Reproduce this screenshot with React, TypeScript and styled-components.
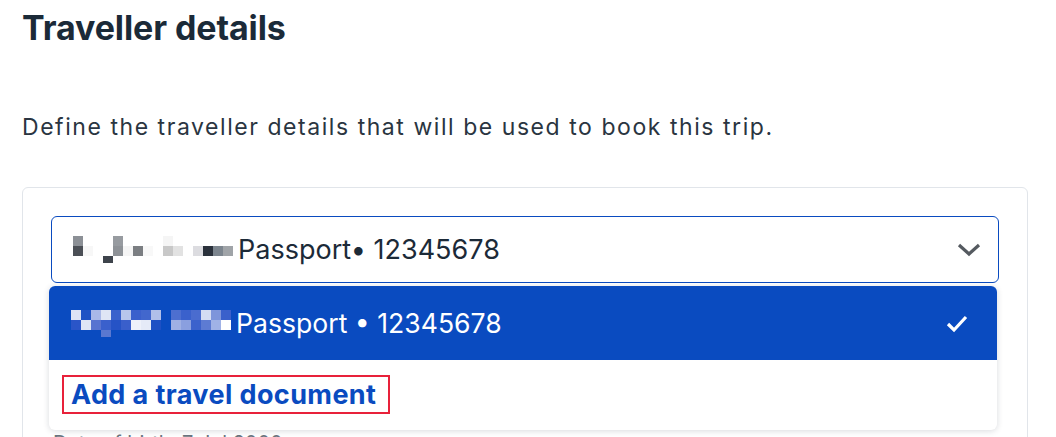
import { FC } from "react";
import styled, { createGlobalStyle } from "styled-components";

const GlobalStyle = createGlobalStyle`
  body {
    margin: 0;
    background: #ffffff;
    font-family: Inter, "Noto Sans", sans-serif;
    color: #1c2a38;
  }
`;

// mosaic cells that hide the traveller name: [column, row, colour]
type Cell = [number, number, string];

const closedName: Cell[] = [
  [0, 0, "#8c9096"], [0, 1, "#4b4f56"],
  [1, 1, "#f7f7f7"],
  [3, 2, "#3e444c"],
  [4, 0, "#979ba0"], [4, 1, "#8e9297"],
  [5, 1, "#f5f5f5"],
  [6, 1, "#7b7e82"],
  [7, 1, "#f8f8f8"],
  [9, 0, "#f5f5f5"], [9, 1, "#c8c8c8"],
  [10, 1, "#e2e2e2"],
  [12, 1, "#dcdce0"],
  [13, 1, "#2a313b"],
  [14, 1, "#7c858e"],
  [15, 1, "#a0a4a8"],
];

const openName: Cell[] = [
  [0, 0, "#dde3f5"], [0, 1, "#2a55c8"],
  [1, 0, "#1f52c4"], [1, 1, "#dfe5f5"],
  [2, 0, "#a9b8e8"], [2, 1, "#5873d0"],
  [3, 0, "#dfe5f5"], [3, 1, "#3a60cc"], [3, 2, "#5a78d0"],
  [4, 0, "#3b62cc"], [4, 1, "#2653c6"],
  [5, 0, "#b8c6ec"], [5, 1, "#3a5fcb"],
  [6, 0, "#3b60cc"], [6, 1, "#eef1fa"],
  [7, 0, "#4267cd"], [7, 1, "#e5eaf7"],
  [8, 0, "#b0bfe9"], [8, 1, "#1e50c4"],
  [10, 0, "#4d6fd0"], [10, 1, "#9fb0e4"],
  [11, 0, "#3a61cc"], [11, 1, "#8a9fdf"],
  [12, 0, "#4a6ccf"], [12, 1, "#3c62cc"],
  [13, 0, "#d4dcf3"], [13, 1, "#5d7bd3"],
  [14, 0, "#7e95db"], [14, 1, "#a0b2e6"],
  [15, 0, "#3a60cb"], [15, 1, "#ffffff"],
];

const Page = styled.div`
  padding: 0 22px;
  width: 1006px;
`;

const Title = styled.h1`
  margin: 0;
  padding-top: 6px;
  font-size: 34px;
  line-height: 44px;
  font-weight: 700;
  color: #1b2a38;
  letter-spacing: -0.1px;
`;

const Intro = styled.p`
  margin: 62px 0 0;
  font-size: 23px;
  line-height: 30px;
  letter-spacing: 1.55px;
  color: #2a3541;
`;

const Card = styled.div`
  position: relative;
  margin-top: 45px;
  border: 1px solid #e1e5ea;
  border-radius: 6px;
  padding: 28px 28px 0 28px;
  height: 260px;
`;

const Select = styled.div`
  display: flex;
  align-items: center;
  height: 65px;
  border: 1px solid #0a4bc0;
  border-radius: 6px;
  padding: 0 16px 0 21px;
  font-size: 27px;
  color: #1c2a38;
`;

const SelectLabel = styled.span`
  flex: 1;
  display: flex;
  align-items: center;
  gap: 5px;
`;

const Hint = styled.div`
  margin-top: 148px;
  padding-left: 2px;
  font-size: 20px;
  color: #6b7580;
`;

const Menu = styled.div`
  position: absolute;
  left: 26px;
  top: 98px;
  width: 948px;
  border-radius: 6px;
  background: #ffffff;
  box-shadow: 0 1px 6px rgba(20, 30, 50, 0.16);
  overflow: hidden;
`;

const Option = styled.div<{ $selected?: boolean }>`
  display: flex;
  align-items: center;
  height: 74px;
  padding: 0 28px 0 22px;
  font-size: 26.6px;
  background: ${(p) => (p.$selected ? "#0a4bc0" : "#ffffff")};
  color: ${(p) => (p.$selected ? "#ffffff" : "#1c2a38")};
`;

const AddRow = styled.div`
  height: 70px;
  padding: 15px 0 0 13px;
  box-sizing: border-box;
`;

const AddLink = styled.a`
  display: inline-block;
  border: 2px solid #e8213a;
  padding: 0 12px 0 7px;
  font-size: 27px;
  line-height: 35px;
  letter-spacing: 0.4px;
  font-weight: 700;
  color: #0a4bc0;
  text-decoration: none;
`;

const Mosaic: FC<{ cells: Cell[] }> = ({ cells }) => (
  <svg width="160" height="27" viewBox="0 0 160 27">
    {cells.map(([c, r, fill]) => (
      <rect key={`${c}-${r}`} x={c * 10} y={r * 10} width="10" height={r === 2 ? 7 : 10} fill={fill} />
    ))}
  </svg>
);

const App: FC = () => (
  <>
    <GlobalStyle />
    <Page>
      <Title>Traveller details</Title>
      <Intro>Define the traveller details that will be used to book this trip.</Intro>
      <Card>
        <Select>
          <SelectLabel>
            <Mosaic cells={closedName} />
            <span>Passport• 12345678</span>
          </SelectLabel>
          <svg width="26" height="16" viewBox="0 0 26 16">
            <path d="M3 3 L13 12 L23 3" fill="none" stroke="#555a60" strokeWidth="3.2" />
          </svg>
        </Select>
        <Hint>Date of birth: 7 Jul 2000</Hint>
        <Menu>
          <Option $selected>
            <SelectLabel>
              <Mosaic cells={openName} />
              <span>Passport • 12345678</span>
            </SelectLabel>
            <svg width="24" height="20" viewBox="0 0 24 20">
              <path d="M3 11 L9 17 L21 4" fill="none" stroke="#ffffff" strokeWidth="3.2" />
            </svg>
          </Option>
          <AddRow>
            <AddLink href="#">Add a travel document</AddLink>
          </AddRow>
        </Menu>
      </Card>
    </Page>
  </>
);

export default App;
